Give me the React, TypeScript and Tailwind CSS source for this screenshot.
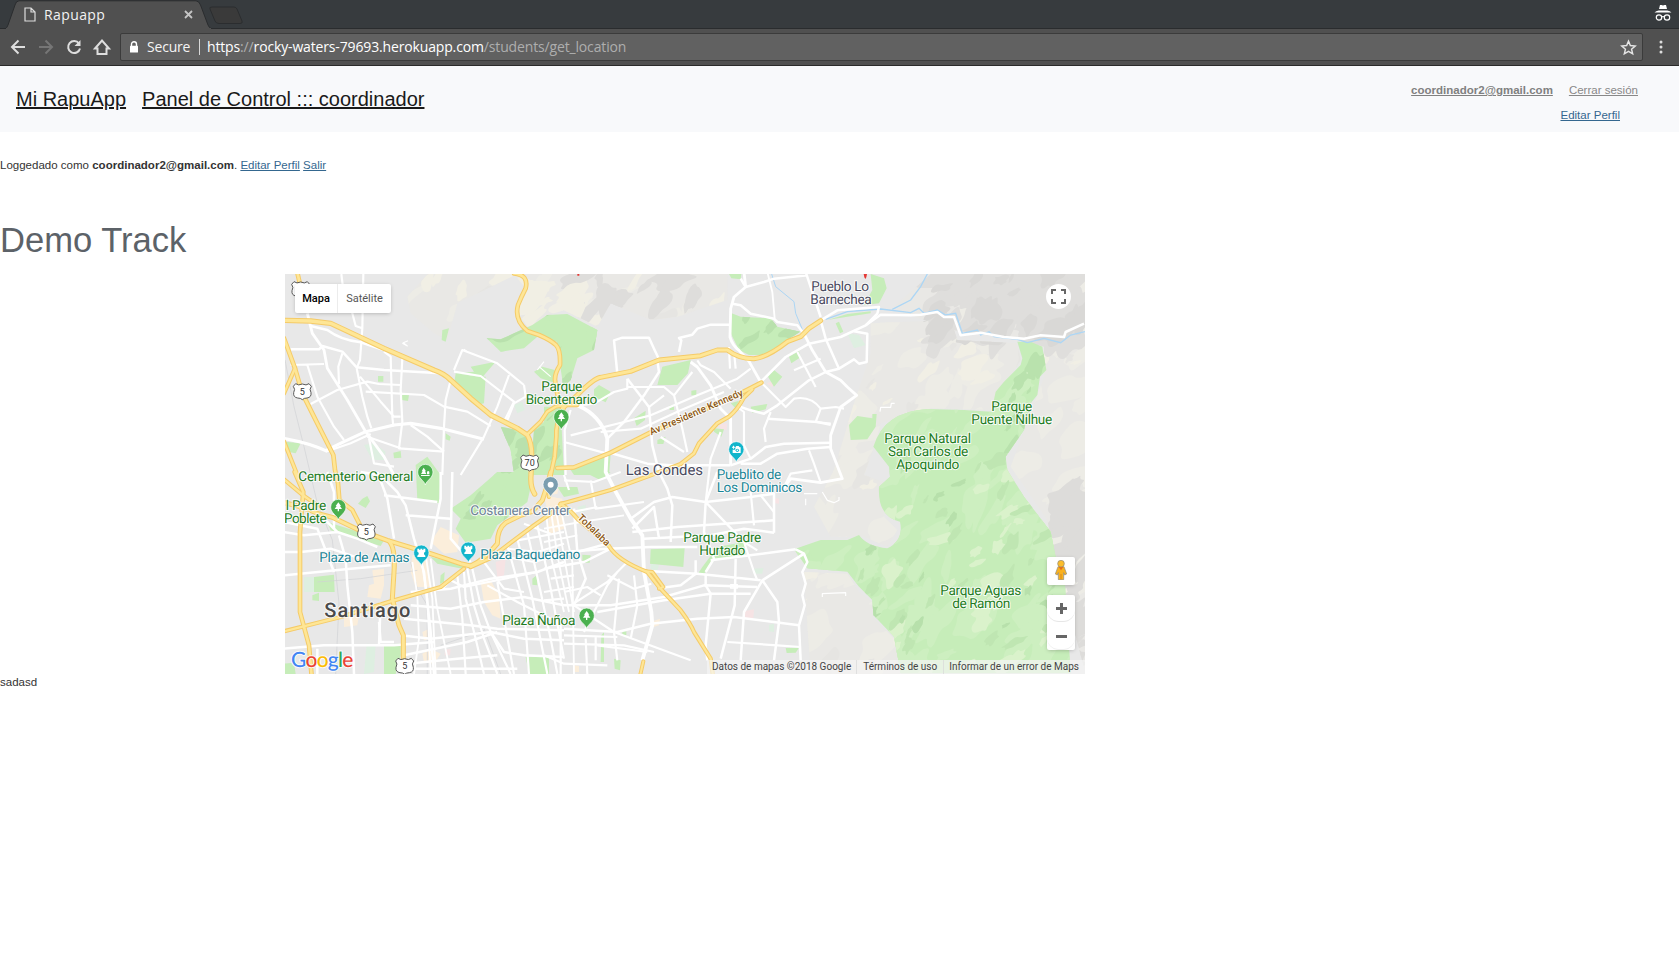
import React from "react";

type Pt = [number, number];

/* Map drawing is authored on a 2400x1200 canvas split in tiles. */
const TILES: Record<string, Pt> = {
  A: [-3, -12],
  B: [777, -12],
  C: [1557, -12],
  D: [-3, 594],
  E: [777, 594],
  F: [1557, 594],
  G: [837, -6],
};

type Piece = [string, string, number?];

const majorRoads: Piece[] = [
  ["A", "M0 151 L80 153 L140 160 L300 235 L450 300 Q480 310 500 330 L560 385 L620 435 L660 455 L700 475 L730 495 Q744 520 743 560 L741 615 Q738 650 752 672", 10],
  ["A", "M40 8 L52 60 M0 205 L33 295 L55 370 L100 460 L148 555 L153 600 L162 640 L166 690 L205 720 L228 765", 8],
  ["A", "M0 370 L33 295 M0 515 L40 615", 7],
  ["A", "M690 10 Q735 15 725 55 Q712 80 702 105 Q690 150 730 183 L765 195 Q800 210 816 225 Q830 240 828 285 Q812 310 813 330 L822 385 L840 412", 8],
  ["A", "M730 493 L770 455 L790 425 L815 410 L840 405 L880 405", 7],
  ["A", "M838 420 Q814 460 817 500 L812 560 L800 615 L795 680", 8],
  ["B", "M55 415 L100 375 Q150 325 170 322 L260 304 L345 270 L470 257 L520 240 L550 240 Q585 267 630 266 Q670 262 730 215 L770 200 L795 175 L830 152", 9],
  ["B", "M40 594 L90 592 L200 548 L320 487 L560 385 L652 338", 8],
  ["B", "M625 358 L600 382 Q580 420 555 440 L520 460 L465 520 L450 550 L410 582 L320 616 L200 660 L130 680 L50 702", 7],
  ["D", "M0 92 Q60 105 100 124 L145 136 L220 172 L310 205 L440 245 L530 275 L560 282 Q600 265 640 215 Q640 170 665 152 L710 130 L745 118 L775 85 L790 40 L800 0", 9],
  ["D", "M0 22 L60 72 L100 100", 7],
  ["D", "M560 285 L620 258 L680 212 L750 160 L800 125 L835 95", 7],
  ["D", "M0 478 L170 435 L320 388 L470 345 L540 290", 7],
  ["D", "M32 0 L58 60 L48 180 L48 420 L75 520 L83 612", 8],
  ["D", "M316 208 Q335 230 330 300 L325 380 L345 460 L358 490 L358 560", 9],
  ["E", "M50 95 Q80 115 100 140 L195 222 Q220 265 310 300 L345 345 L410 415 Q440 455 450 480 L500 560 L507 612", 7],
  ["E", "M305 298 L325 300 L358 345 L345 350 M298 568 L288 612", 6],
];

const whiteRoads: Piece[] = [
  ["A", "M70 130 L85 190 L120 240 L130 295 L190 390 L245 485 L300 560 L330 615", 7],
  ["A", "M0 505 Q80 520 125 542 L180 515 L245 485 L330 465 L380 460 L470 475 L600 508", 8],
  ["A", "M125 545 L200 520 L260 492", 5],
  ["A", "M172 12 L178 60 L205 130 L215 168 L235 175 L238 12 M235 175 L228 270 L218 295", 5],
  ["A", "M80 168 L130 180 Q170 210 230 217 L300 240 M20 238 L105 238 L115 228 L175 245 L218 292 L300 300 L470 310", 6],
  ["A", "M20 285 L120 282 M70 285 L100 380 L150 470 L180 510 M175 250 L163 290 L165 342 M80 402 L160 360 L250 335 L285 342 L350 345", 5],
  ["A", "M218 295 L235 380 L250 440 L262 475 M228 320 L290 395 L330 440 L350 440 M300 245 L320 260 L325 440 L328 470", 5],
  ["A", "M355 265 L350 360 L355 455 L345 535 L480 545 M245 365 L420 375 L480 410 L550 425 L620 468", 5],
  ["A", "M500 330 L485 390 L480 470 L475 615 M510 300 L535 240 L600 265 L640 280 L720 345 M510 305 L590 318 L690 395 L660 455 M675 315 L640 410 L600 500 L530 615", 5],
  ["A", "M720 345 L725 380 L690 400 L670 450 M380 465 L430 500 L480 545 M255 505 L270 580 L330 590 M250 500 L350 535", 5],
  ["A", "M540 238 L550 245 M355 220 L370 228 L358 218 L372 212 M765 290 L800 320 M780 275 L760 300", 2],
  ["B", "M65 615 L62 480 L80 420 M60 615 L75 660", 5],
  ["G", "M540 0 L545 45 L510 75 L500 110 L498 195 Q505 220 525 235 L555 268 L590 330", 7],
  ["G", "M545 45 L600 30 L630 20 L730 10 M725 0 L770 135 M530 20 L545 45", 6],
  ["G", "M505 95 L530 100 L560 125 L630 140 L640 150 L700 160 L720 185", 6],
  ["G", "M610 0 L625 60 L632 140", 4],
  ["G", "M345 240 L352 205 L345 198 L385 188 L400 170 L440 158 L498 158 M160 305 L150 205 L175 197 L255 197 L270 230 L285 262", 6],
  ["G", "M770 145 L820 115 L945 105 L940 125 L905 160 L830 195 L735 215 L665 255 L590 330", 6],
  ["G", "M905 160 L950 128 L1040 130 L1070 128 L1120 120 L1140 135 L1170 135 L1190 190 L1250 182 L1320 195 L1380 200 L1430 190 L1500 195 L1505 180 L1560 155", 6],
  ["G", "M870 178 L910 185 L908 270 L885 275 L870 262 L825 290 L785 300", 6],
  ["G", "M720 185 L745 235 L785 300 L830 325 L850 345 L878 370 L830 405 L800 490 L800 530 L835 620 L770 632 L680 620 L655 655", 7],
  ["G", "M770 145 L785 200 L825 290 M785 300 L735 325 L640 400 L600 425 L560 415 L530 405", 6],
  ["G", "M700 240 L755 345 M690 295 L770 260", 5],
  ["G", "M590 330 L665 405 L690 380 Q740 370 770 410 L815 405 L840 410 M770 410 L755 450 L800 455 M620 420 L600 470 L605 510", 5],
  ["G", "M610 440 L760 450 L800 458 M500 580 L560 560 L605 525 L660 515 L800 512 M530 575 L590 575 L640 545 L730 530 L800 525", 6],
  ["G", "M735 535 L750 575 L770 632 M655 655 L680 605 L745 595", 5],
  ["G", "M40 400 Q110 430 130 500 L125 600 L150 650 L200 740 L235 790 L240 900 L262 1020 L265 1060 L235 1165", 10],
  ["G", "M130 540 L250 575 L320 580 L500 580", 6],
  ["G", "M190 320 L255 405 L265 520 L285 600 L310 650 L325 700 L320 810", 6],
  ["G", "M280 265 L285 300 L240 370 L180 450 L130 500", 6],
  ["G", "M0 510 L130 545 M20 490 L180 450 L260 430 L400 370 L520 320 L560 290 M110 480 L230 470 L350 415 L480 360", 5],
  ["G", "M380 270 L400 285 L440 340 L470 410 L500 440 L500 580", 7],
  ["G", "M400 265 L410 280 L450 300 L500 350 M385 300 L330 370 L355 470 L370 540 M190 320 L190 350 L150 360 L90 395 L40 400 M255 405 L300 370 M330 370 L300 345 L190 345", 5],
  ["G", "M290 495 L360 540 M520 405 L540 420 L540 520 L560 560 M495 225 L498 290 M510 240 L515 290 M470 480 L440 560 L425 690", 5],
  ["G", "M425 690 L325 675 L270 690 L200 740 M425 690 L560 675 L630 665 L630 782 M425 690 L540 810 M425 690 L460 600 M425 690 L420 780 L450 860 L425 900", 6],
  ["G", "M205 770 L270 705 L285 800 M205 780 L340 765 L630 745 M240 800 L440 790 L540 770 L630 782 M0 840 L130 830 L260 825 L400 825", 6],
  ["G", "M80 625 L95 710 L240 690 M0 725 L100 705 M560 660 L570 760 M590 670 L630 720 M0 625 L90 630 L170 600", 5],
  ["G", "M695 832 L440 865 M695 832 L720 845 L730 870 L715 900 L725 935 L715 970 L722 1000 L705 1060 L710 1165", 6],
  ["G", "M720 845 L595 925 L540 1020 L530 1165 M595 925 L640 990 L645 1050 L630 1165", 6],
  ["G", "M250 897 L400 905 L590 925 M395 865 L395 905 L350 940 L290 948 M425 905 L425 940 L440 965 L425 1120 L430 1165 M515 860 L512 1000 L470 1160", 6],
  ["G", "M0 1000 L140 1000 L300 975 L420 940 L580 945 M100 1020 L300 985 L440 965 L560 965 M0 1070 L160 1080 L260 1055 L400 1040 L510 1035 L705 1060", 6],
  ["G", "M490 1110 L640 1120 L710 1125 M30 1000 L150 1080 L380 1165 M100 1120 L250 1140 M540 810 L570 900 L580 925 M540 810 L580 835", 5],
  ["G", "M160 900 L130 940 L60 1080 M165 920 L150 1080 L160 1165 M210 910 L220 1000 L200 1100 M190 870 L130 930 L20 1000 M130 910 L210 950 L262 935", 5],
  ["G", "M0 1090 L160 1095 M0 1115 L180 1120 L270 1140 M95 1095 L95 1165 M0 960 L70 945 L110 970", 5],
  ["G", "M500 938 L520 938 L520 948 L500 948 Z", 3],
  ["C", "M228 425 L230 412 L260 412 L262 400 L272 400", 2],
  ["D", "M0 180 L60 190 L160 180 L220 200 L280 225 M165 190 L185 260 L190 340 L205 480 L210 606 M110 130 L160 180 M0 150 L100 170 L150 300", 6],
  ["D", "M230 0 L290 10 L340 60 L365 100 L390 200 L420 300 L440 480 L450 606 M280 0 L310 80 L330 200 M300 70 L460 90 M365 130 L500 140", 6],
  ["D", "M470 0 L470 80 L440 230 M505 0 L500 200 L560 270 M130 0 L150 60 L150 170 M0 240 L50 240 L140 230 L230 260", 6],
  ["D", "M410 250 L430 380 L440 606 M425 250 L445 380 L455 606 M440 260 L458 400 L500 606 M385 270 L400 370 L405 500 L390 606", 4],
  ["D", "M550 290 L570 400 L600 500 L640 606 M565 290 L590 400 L620 480 L680 606 M540 300 L545 380 L575 500 L600 606 M520 310 L535 440 L545 606", 5],
  ["D", "M380 360 L500 350 L620 320 L760 300 L840 270 M380 400 L500 410 L600 390 L720 375 L840 400 M360 440 L560 460 L640 470 L840 475", 6],
  ["D", "M350 490 L440 500 L620 480 L720 500 L840 505 M0 530 L120 520 L330 520 L450 510 M360 550 L550 510 L640 480 M285 450 L290 510 L330 510", 6],
  ["D", "M620 480 L660 540 L720 550 L840 555 M370 575 L520 560 L640 550 M370 590 L700 590 M100 530 L100 606 M290 390 L285 520 M0 310 L200 290 L320 280", 6],
  ["D", "M640 330 L690 606 M670 220 L720 400 L735 606 M700 200 L745 380 L790 606 M730 180 L770 360 L800 500 L820 606 M760 160 L800 350 L840 560 M600 270 L660 350 L720 360", 5],
  ["D", "M640 250 L750 270 L840 245 M670 230 L760 240 L840 215 M700 205 L840 180 M610 340 L700 390 L800 440 M720 155 L800 185 M475 350 L500 325 L540 345 L760 300", 5],
  ["E", "M5 110 L20 250 L60 420 M20 110 L40 250 L75 420 M35 110 L65 280 L90 420 M50 110 L85 270 L90 606 M0 170 L110 150 L240 130 M0 210 L100 190", 4],
  ["E", "M0 260 L100 240 L190 215 M0 290 L120 270 L200 230 M90 110 L100 240 L125 320 L90 400", 6],
  ["E", "M0 550 L60 575 L190 580 M50 440 L50 606 M125 500 L130 606 M20 320 L90 310 M0 385 L60 380 M0 360 L90 345", 5],
  ["F", "M0 65 L40 65 M5 100 L5 80 M55 60 L70 85 L90 92 L105 85 L105 75", 2],
  ["F", "M55 375 L55 365 L125 362 L125 372", 2],
];

const greens: Piece[] = [
  ["A", "M608 205 L650 208 L690 190 L745 165 L790 135 L850 132 L940 180 L930 240 L880 265 L860 330 L838 350 L818 215 L760 200 L720 235 L650 245 Z"],
  ["A", "M750 305 L775 290 L812 300 L815 340 L770 325 Z"],
  ["A", "M515 310 L595 322 L635 275 L560 290 L570 305 M515 310 L605 320 L600 400 L580 405 L510 345 Z"],
  ["A", "M650 470 L700 480 L728 500 L750 600 L690 615 L680 540 Z M750 480 L830 415 L840 615 L740 615 Z"],
  ["A", "M475 180 L495 175 L485 215 L473 210 Z M355 373 L375 375 L372 393 L353 390 Z M282 318 L298 318 L298 335 L282 335 Z M328 548 L350 543 L352 563 L330 565 Z M3 515 L50 520 L35 550 L10 545 Z M485 490 L500 500 L497 512 L485 508 Z"],
  ["A", "M395 585 L430 560 L470 615 L465 700 L400 690 Z"],
  ["B", "M563 130 L590 140 L680 145 L700 170 L768 185 L730 210 L660 255 L615 255 L585 240 L560 190 Z"],
  ["B", "M355 290 L440 270 L432 310 L400 345 L340 345 Z M150 358 L165 345 L200 365 L185 397 L150 380 Z M270 445 L305 422 L303 450 L278 468 Z M340 510 L365 500 L358 522 L340 522 Z M442 362 L457 360 L457 376 L442 376 Z M375 408 L390 404 L390 420 L377 420 Z"],
  ["B", "M0 410 L50 410 L40 520 L15 560 L0 615 Z M80 600 L150 560 L200 553 L195 615 L90 615 Z"],
  ["B", "M690 300 L715 320 L690 350 L672 320 Z M735 260 L765 243 L770 262 L742 280 Z M620 410 L670 402 L665 418 L625 428 Z M510 475 L540 478 L532 500 L510 485 Z M555 12 L592 12 L590 28 L562 25 Z M560 400 L585 392 L575 415 Z"],
  ["C", "M200 12 L240 25 L248 55 L225 100 L180 106 L205 60 Z M95 160 L105 155 L118 185 L108 190 Z M70 150 L130 132 L200 124 L200 130 L130 140 Z"],
  ["C", "M135 465 L160 438 L205 445 L205 432 L218 432 L215 470 L190 508 L140 510 Z"],
  ["C", "M208 530 Q240 425 370 417 L480 420 L562 425 L575 365 L600 335 L650 285 L655 265 L640 215 L680 215 L715 230 L727 300 L708 320 L700 375 L680 400 L660 480 L605 560 L610 600 L660 680 L740 785 L755 860 L780 900 L800 1210 L290 1210 L270 1100 L208 1035 L205 990 L165 950 L130 905 L10 895 L-30 838 L50 810 L130 810 L165 795 Q190 830 250 835 Q300 810 288 755 Q220 740 225 650 L258 620 L255 590 Z"],
  ["D", "M500 110 L560 70 L640 0 L750 0 L730 90 L680 130 L640 160 L620 200 L545 212 L515 170 L530 140 Z"],
  ["D", "M130 150 L225 180 L300 205 L290 222 L140 175 Z M90 315 L150 308 L152 360 L90 360 Z M85 370 L105 362 L105 387 L85 385 Z M300 517 L350 515 L350 550 L335 606 L300 606 Z M725 555 L795 553 L795 606 L735 606 Z"],
  ["D", "M235 80 L250 72 L258 88 L245 108 L222 95 Z M440 255 L540 278 L535 290 L460 275 Z M470 310 L482 300 L480 330 L468 335 Z M745 320 L758 310 L760 340 L745 338 Z M0 575 L30 572 L35 606 L0 606 Z"],
  ["E", "M320 232 L422 228 L418 285 L318 275 Z M115 248 L140 250 L137 272 L115 272 Z M475 285 L520 225 L600 210 L605 250 L510 265 L480 305 L460 308 Z M750 235 L790 220 L820 290 L790 288 L785 250 Z"],
  ["E", "M235 478 L247 478 L247 490 L235 490 Z M725 528 L765 527 L755 542 L728 543 Z M0 558 L15 562 L15 606 L0 606 Z M172 490 L180 480 L180 570 L170 570 Z M210 560 L230 565 L228 595 L212 590 Z M120 0 L200 0 L170 25 Z M40 45 L100 45 L105 65 L60 75 Z"],
];

const paleGreens: Piece[] = [
  ["A", "M690 405 L715 395 L722 420 L700 430 Z M240 525 L270 520 L305 545 L300 570 L265 570 Z"],
  ["C", "M130 190 L165 195 L185 225 L150 235 Z"],
  ["D", "M248 515 L275 518 L270 600 L240 606 Z M60 315 L90 315 L90 360 L60 360 Z"],
  ["E", "M630 290 L658 288 L655 305 L635 305 Z M675 458 L690 455 L690 480 L675 478 Z M100 105 L125 98 L125 118 L105 120 Z M320 275 L345 280 L340 295 L320 292 Z"],
];

const creams: Piece[] = [
  ["D", "M440 210 L470 165 L525 190 L520 240 L480 245 Z M385 250 L430 250 L440 345 L395 345 L380 300 Z M265 295 L300 290 L300 340 L290 380 L250 375 L255 340 L270 335 Z M180 435 L225 430 L220 460 L180 465 Z"],
  ["D", "M590 330 L620 325 L645 370 L650 440 L625 430 L600 390 Z M415 480 L435 470 L445 500 L420 505 Z M415 545 L440 530 L470 545 L450 575 L420 570 Z M800 75 L835 80 L840 170 L790 190 Z"],
  ["E", "M0 70 L50 80 L60 110 L10 120 Z M320 450 L348 440 L345 460 L320 468 Z M90 580 L105 582 L105 600 L90 600 Z M10 50 L45 45 L40 65 L15 70 Z"],
];

const terrain: Piece[] = [
  ["A", "M370 80 L430 12 L690 12 L725 55 L700 130 L740 180 L780 140 L840 120 L940 170 L980 100 L1100 150 L1180 140 L1330 90 L1330 12 L700 12 L520 100 L490 210 L450 190 L380 130 Z"],
  ["C", "M380 12 L843 12 L843 1206 L750 850 L730 750 L620 590 L720 320 L720 230 L640 210 L450 180 L300 130 L270 110 Z"],
  ["C", "M200 160 L440 150 L460 210 L640 220 L650 270 L560 420 L380 415 L230 460 L215 520 L180 615 L250 640 L240 740 L280 780 L250 830 L180 800 L80 800 L30 710 L90 600 L150 400 L200 250 Z"],
  ["F", "M0 300 L130 305 L165 360 L205 390 L210 440 L270 500 L290 606 L20 606 Z"],
];

const pinkish: Piece[] = [
  ["E", "M600 418 L630 412 L628 438 L602 440 Z M692 78 L705 80 L705 95 L692 94 Z"],
  ["D", "M635 270 L665 260 L660 310 L640 318 Z M483 533 L500 530 L498 550 L482 550 Z"],
  ["B", "M668 340 L690 332 L685 352 Z M525 462 L550 460 L548 480 L528 478 Z"],
];

const rivers: Piece[] = [
  ["B", "M683 12 L695 50 L750 95 L755 130 L775 178", 3],
  ["C", "M370 12 L350 50 L320 90 L265 118 M65 148 L130 125 L230 117 L320 128 L345 115 L360 130 L400 120 L425 135 L455 130 L475 190 L520 180 L530 195 L555 185 L570 200 L640 208 L670 218 L720 205 L770 218 L800 195 L843 185", 4],
];

const rails: Piece[] = [
  ["A", "M3 270 L30 410 L60 530 L80 615 L100 700 L145 810 L165 1000 L155 1212", 2],
  ["D", "M100 330 L230 320 L400 295 M380 270 L400 350 L430 400 L430 606 M600 470 L650 606 M470 520 L600 475", 2],
];

/* Outline of the large eastern park, reused to clip its relief. */
const EAST_PARK = greens[12][1];

function Layer({ data, widen = 0, ...rest }: { data: Piece[]; widen?: number } & React.SVGProps<SVGGElement>) {
  return (
    <g {...rest}>
      {data.map(([t, d, w], i) => (
        <path key={i} d={d} strokeWidth={w === undefined ? undefined : w + widen} transform={`translate(${TILES[t][0]} ${TILES[t][1]})`} />
      ))}
    </g>
  );
}

/* Slanted relief patches with rounded outlines, repeatable from a seed. */
function relief(seed: number, count: number, box: [number, number, number, number], size: number) {
  let s = seed;
  const rnd = () => {
    s = (s * 1664525 + 1013904223) % 4294967296;
    return s / 4294967296;
  };
  const out: string[] = [];
  for (let i = 0; i < count; i++) {
    const cx = box[0] + rnd() * box[2];
    const cy = box[1] + rnd() * box[3];
    const len = size * (0.4 + rnd() * 1.1);
    const wid = len * (0.25 + rnd() * 0.4);
    const rot = -0.8 + (rnd() - 0.5) * 1.1;
    const pts: Pt[] = [];
    const n = 14;
    for (let k = 0; k < n; k++) {
      const a = (k / n) * Math.PI * 2;
      const r = 0.5 + rnd() * 0.8;
      const x = Math.cos(a) * len * r;
      const y = Math.sin(a) * wid * r;
      pts.push([cx + x * Math.cos(rot) - y * Math.sin(rot), cy + x * Math.sin(rot) + y * Math.cos(rot)]);
    }
    const mid = (p: Pt, q: Pt) => `${((p[0] + q[0]) / 2).toFixed(0)} ${((p[1] + q[1]) / 2).toFixed(0)}`;
    let d = `M${mid(pts[n - 1], pts[0])}`;
    for (let k = 0; k < n; k++) {
      d += `Q${pts[k][0].toFixed(0)} ${pts[k][1].toFixed(0)} ${mid(pts[k], pts[(k + 1) % n])}`;
    }
    out.push(d + "Z");
  }
  return out;
}

function Relief({ shapes, fill }: { shapes: string[]; fill: string }) {
  return (
    <g fill={fill}>
      {shapes.map((d, i) => (
        <path key={i} d={d} />
      ))}
    </g>
  );
}

function Pin({ x, y, color, kind }: { x: number; y: number; color: string; kind: "tree" | "rook" | "camera" | "dot" | "grave" }) {
  return (
    <g transform={`translate(${x} ${y})`}>
      <path d="M0 38 C-3 24 -23 18 -23 -1 A23 23 0 1 1 23 -1 C23 18 3 24 0 38Z" fill={color} stroke="#fff" strokeWidth="2" />
      {kind === "tree" && <path d="M0 -15 L8 -4 H5 L11 5 H2 V12 H-2 V5 H-11 L-5 -4 H-8Z" fill="#fff" />}
      {kind === "grave" && <path d="M-5 -14 L2 -3 H-1 L3 5 H-13 L-8 -3 H-11Z M5 -2 Q9 -6 12 -2 V6 H5Z M-13 8 H13 V11 H-13Z" fill="#fff" />}
      {kind === "rook" && <path d="M-12 -13 H-6 V-9 H-3 V-13 H3 V-9 H6 V-13 H12 V-4 L8 -1 V4 L12 8 V12 H-12 V8 L-8 4 V-1 L-12 -4Z" fill="#fff" />}
      {kind === "camera" && (
        <>
          <path d="M-3 -7 L0 -11 H7 L10 -7 H13 V10 H-11 V0 H-3Z M-13 -9 H-10 V-12 H-7 V-9 H-4 V-6 H-7 V-3 H-10 V-6 H-13Z" fill="#fff" />
          <circle cx="3" cy="2" r="5" fill={color} />
          <circle cx="3" cy="2" r="2.5" fill="#fff" />
        </>
      )}
      {kind === "dot" && <circle r="9" fill="#fff" />}
    </g>
  );
}

function Shield({ x, y, n }: { x: number; y: number; n: string }) {
  return (
    <g transform={`translate(${x} ${y})`}>
      <path
        d="M-20 -23 Q-12 -16 0 -22 Q12 -16 20 -23 L27 -15 Q20 -6 26 4 Q28 18 14 20 Q5 20 0 25 Q-5 20 -14 20 Q-28 18 -26 4 Q-20 -6 -27 -15Z"
        fill="#fff"
        stroke="#5b5b5b"
        strokeWidth="3"
      />
      <text textAnchor="middle" y="10" fontSize="27" fill="#333">
        {n}
      </text>
    </g>
  );
}

type LabelData = [string, number, number, number, string, number?];
const GREEN = "#1f7d24";
const TEAL = "#1b8596";
const INK = "#4a4a60";
const labels: LabelData[] = [
  ["Pueblo Lo", 1579, 50, 173, INK],
  ["Barnechea", 1576, 89, 184, INK],
  ["Parque", 2119, 410, 123, GREEN],
  ["Puente Ñilhue", 2059, 449, 243, GREEN],
  ["Parque Natural", 1798, 506, 260, GREEN],
  ["San Carlos de", 1809, 545, 241, GREEN],
  ["Apoquindo", 1834, 584, 189, GREEN],
  ["Parque Aguas", 1966, 963, 243, GREEN],
  ["de Ramón", 2002, 1002, 174, GREEN],
  ["Las Condes", 1022, 603, 232, INK, 45],
  ["Pueblito de", 1295, 614, 194, TEAL],
  ["Los Dominicos", 1295, 653, 257, TEAL],
  ["Parque Padre", 1195, 803, 234, GREEN],
  ["Hurtado", 1243, 842, 138, GREEN],
  ["Parque", 769, 350, 123, GREEN],
  ["Bicentenario", 722, 389, 215, GREEN],
  ["Cementerio General", 40, 620, 345, GREEN],
  ["l Padre", 2, 708, 122, GREEN],
  ["Poblete", -3, 746, 128, GREEN],
  ["Plaza de Armas", 103, 863, 271, TEAL],
  ["Plaza Baquedano", 586, 854, 300, TEAL],
  ["Costanera Center", 556, 722, 301, "#6c8297"],
  ["Plaza Ñuñoa", 652, 1052, 219, GREEN],
];

function MapCanvas() {
  return (
    <svg viewBox="0 0 2400 1200" className="block h-[400px] w-[800px]" fontFamily="Roboto, sans-serif">
      <defs>
        <clipPath id="parkClip">
          <path d={EAST_PARK} transform="translate(1557 -12)" />
        </clipPath>
        <clipPath id="hillClip">
          {terrain.map(([t, d], i) => (
            <path key={i} d={d} transform={`translate(${TILES[t][0]} ${TILES[t][1]})`} />
          ))}
        </clipPath>
        <clipPath id="westClip">
          <path d={greens[0][1]} transform="translate(-3 -12)" />
          <path d={greens[3][1]} transform="translate(-3 -12)" />
          <path d={greens[6][1]} transform="translate(777 -12)" />
          <path d={greens[13][1]} transform="translate(-3 594)" />
        </clipPath>
      </defs>
      <rect width="2400" height="1200" fill="#e8e8e8" />
      <Layer data={terrain} fill="#e9e8e5" />
      <g clipPath="url(#hillClip)">
        <Relief shapes={relief(11, 190, [350, 0, 2050, 1200], 62)} fill="#edece6" />
        <Relief shapes={relief(67, 110, [350, 0, 2050, 1200], 42)} fill="#f1efe5" />
        <Relief shapes={relief(5, 80, [350, 0, 2050, 1200], 34)} fill="#e6e5e2" />
        <Relief shapes={relief(23, 50, [1950, 0, 450, 190], 66)} fill="#dfdedc" />
        <Relief shapes={relief(29, 22, [1950, 0, 450, 190], 44)} fill="#d9d8d6" />
        <Relief shapes={relief(9, 34, [2330, 600, 70, 600], 60)} fill="#dddcda" />
        <Relief shapes={relief(31, 14, [850, 0, 380, 130], 54)} fill="#dedddb" />
        <Relief shapes={relief(37, 12, [700, 30, 160, 110], 60)} fill="#f1efe4" />
      </g>
      <Layer data={creams} fill="#fbeedb" />
      <Layer data={pinkish} fill="#f6e3e4" />
      <Layer data={paleGreens} fill="#deefe1" />
      <Layer data={greens} fill="#c6edb9" />
      <g clipPath="url(#parkClip)">
        <Relief shapes={relief(77, 110, [1540, 200, 860, 1000], 60)} fill="#cdefc0" />
        <Relief shapes={relief(41, 36, [1780, 560, 560, 640], 36)} fill="#daf2cb" />
        <Relief shapes={relief(19, 40, [1700, 560, 680, 560], 32)} fill="#bfe6b2" />
        <Relief shapes={relief(51, 16, [1740, 600, 620, 500], 24)} fill="#b7e0ab" />
        <Relief shapes={relief(53, 14, [2150, 250, 140, 300], 34)} fill="#b9e2ad" />
      </g>
      <g clipPath="url(#westClip)">
        <Relief shapes={relief(3, 70, [480, 100, 1080, 740], 44)} fill="#b9e1ad" />
        <Relief shapes={relief(8, 60, [480, 100, 1080, 740], 34)} fill="#c6edb9" />
      </g>
      <Layer data={rivers} fill="none" stroke="#acd6f5" />
      <Layer data={rails} fill="none" stroke="#d0d2d4" />
      <Layer data={whiteRoads} widen={1.5} fill="none" stroke="#ffffff" strokeLinejoin="round" />
      <Layer data={majorRoads} widen={6} fill="none" stroke="#f5cb68" strokeLinejoin="round" strokeLinecap="round" />
      <Layer data={majorRoads} fill="none" stroke="#fee696" strokeLinejoin="round" strokeLinecap="round" />
      <path d="M877 0 h6 v5 h-6z M1736 0 h10 l-2 10 l-3 5 l-3 -5z" fill="#e53935" />

      <Shield x={47} y={46} n="" />
      <Shield x={52} y={352} n="5" />
      <Shield x={734} y={566} n="70" />
      <Shield x={244} y={773} n="5" />
      <Shield x={359} y={1176} n="5" />

      <Pin x={829} y={430} color="#4bb04f" kind="tree" />
      <Pin x={421} y={595} color="#4bb04f" kind="grave" />
      <Pin x={160} y={700} color="#4bb04f" kind="tree" />
      <Pin x={905} y={1026} color="#4bb04f" kind="tree" />
      <Pin x={1354} y={527} color="#12b5cb" kind="camera" />
      <Pin x={409} y={837} color="#12b5cb" kind="rook" />
      <Pin x={550} y={828} color="#12b5cb" kind="rook" />
      <Pin x={797} y={632} color="#7b9eb0" kind="dot" />

      <g
        stroke="#fff"
        strokeOpacity="0.85"
        strokeLinejoin="round"
        paintOrder="stroke"
        strokeWidth="6"
        textRendering="geometricPrecision"
      >
        {labels.map(([t, x, y, w, c, size]) => (
          <text key={t + x} x={x} y={y} textLength={w} fontSize={size ?? 41} fill={c}>
            {t}
          </text>
        ))}
        <text x="118" y="1030" textLength="258" fontSize="60" fontWeight="500" fill="#4a4a4a">
          Santiago
        </text>
        <g fill="#8a5716" fontWeight="500" fontSize="30">
          <text textLength="302" transform="translate(1099 484) rotate(-23.5)">
            Av Presidente Kennedy
          </text>
          <text textLength="122" transform="translate(876 733) rotate(44)">
            Tobalaba
          </text>
        </g>
        <text x="18" y="1180" textLength="187" fontFamily="Lato, sans-serif" fontSize="63" fontWeight="500">
          <tspan fill="#4285f4">G</tspan>
          <tspan fill="#ea4335">o</tspan>
          <tspan fill="#fbbc05">o</tspan>
          <tspan fill="#4285f4">g</tspan>
          <tspan fill="#34a853">l</tspan>
          <tspan fill="#ea4335">e</tspan>
        </text>
      </g>
    </svg>
  );
}

function MapWidget() {
  return (
    <div className="relative h-[400px] w-[800px] overflow-hidden bg-[#e8e8e8] font-[Roboto,sans-serif]">
      <MapCanvas />
      <div className="absolute top-[10px] left-[10px] flex h-[29px] rounded-[2px] bg-white text-[11px] leading-[29px] shadow-[0_1px_4px_-1px_rgba(0,0,0,0.3)]">
        <div className="w-[43px] border-r border-[#ececec] text-center font-medium text-black">Mapa</div>
        <div className="w-[53px] text-center text-[#565656]">Satélite</div>
      </div>
      <div className="absolute top-[10px] left-[761px] flex size-[25px] items-center justify-center rounded-full bg-white">
        <svg viewBox="0 0 15 15" className="size-[15px]" fill="none" stroke="#666" strokeWidth="2">
          <path d="M1 5V1H5 M10 1H14V5 M14 10V14H10 M5 14H1V10" />
        </svg>
      </div>
      <div className="absolute top-[283px] left-[762px] flex h-[28px] w-[28px] items-center justify-center rounded-[2px] bg-white pb-[2px] shadow-[0_1px_4px_-1px_rgba(0,0,0,0.3)]">
        <svg viewBox="0 0 36 60" className="h-[20px] w-[12px]">
          <path d="M9 20 H27 L35 42 L29 45 L26 38 V59 H10 V38 L7 45 L1 42Z" fill="#f9b11f" stroke="#8d8a80" strokeWidth="2" />
          <circle cx="18" cy="11" r="10" fill="#fbbd2b" stroke="#8d8a80" strokeWidth="2" />
          <path d="M11 21 H25 L18 31Z" fill="#e3701b" />
          <path d="M18 42 V58" stroke="#d98a17" strokeWidth="3" />
        </svg>
      </div>
      <div className="absolute top-[321px] left-[762px] flex h-[55px] w-[28px] flex-col items-center rounded-[2px] bg-white shadow-[0_1px_4px_-1px_rgba(0,0,0,0.3)]">
        <div className="flex h-[27px] w-[28px] items-center justify-center rounded-b-[12px] border-b border-[#e6e6e6]">
          <svg viewBox="0 0 11 11" className="size-[11px]" stroke="#666" strokeWidth="3">
            <path d="M0 5.5H11M5.5 0V11" />
          </svg>
        </div>
        <div className="flex h-[28px] w-[28px] items-center justify-center rounded-[12px] border-b border-[#eee] pt-[2px]">
          <svg viewBox="0 0 11 11" className="size-[11px]" stroke="#666" strokeWidth="3">
            <path d="M0 5.5H11" />
          </svg>
        </div>
      </div>
      <div className="absolute right-0 bottom-0 flex h-[14px] bg-[#f5f5f5]/70 text-[10px] leading-[14px] whitespace-nowrap text-[#444]">
        <span className="pr-[5px] pl-[5px]">Datos de mapas ©2018 Google</span>
        <span className="border-l border-[#d8d8d8]/70 px-[6px]">Términos de uso</span>
        <span className="border-l border-[#d8d8d8]/70 pr-[6px] pl-[5px]">Informar de un error de Maps</span>
      </div>
    </div>
  );
}

function BrowserChrome() {
  return (
    <div className="h-[66px] font-['Open_Sans','Noto_Sans',sans-serif]">
      <div className="relative flex h-[29px] items-start justify-between bg-[#373b3e]">
        <svg viewBox="0 0 1679 29" className="absolute top-0 left-0 h-[29px] w-[1679px]">
          <path d="M0 28.5H1679" stroke="#2a2c2e" />
          <path d="M5 29 Q7 28 8 25 L15 5 Q16 1 19 .8 H196 Q199 1 200.5 5 L208 25 Q209 28 212 29Z" fill="#505050" stroke="#2a2c2e" />
          <path d="M6 29H211" stroke="#505050" strokeWidth="2" />
          <path d="M210 9 Q209 7 212 7 H234 Q236 7 237 9 L242 21 Q243 23.500 240 23.500 H219 Q216 23.500 215 21Z" fill="#3a3a3a" stroke="#2b2d2f" />
        </svg>
        <div className="relative flex h-[29px] items-center pl-[24px]">
          <svg viewBox="0 0 12 15" className="h-[15px] w-[12px]" fill="none" stroke="#dcdcdc" strokeWidth="1.2">
            <path d="M1 1H7L11 5V14H1Z M7 1V5H11" />
          </svg>
          <span className="ml-[8px] w-[140px] pt-px text-[14px] leading-[28px] tracking-[0.4px] text-[#f2f2f2]">Rapuapp</span>
          <svg viewBox="0 0 9 9" className="h-[9px] w-[9px]" stroke="#c4c4c4" strokeWidth="1.8">
            <path d="M1 1L8 8M8 1L1 8" />
          </svg>
        </div>
        <svg viewBox="0 0 18 18" className="relative mt-[4px] mr-[7px] size-[18px]" fill="#fff">
          <path d="M5 5 L6 1 L7.500 1 L9 1.600 L10.500 1 H12 L13 5Z M0.500 8.500 Q2 6.800 4.500 6.500 H13.500 Q16 6.800 17.500 8.500Z" />
          <g fill="none" stroke="#fff" strokeWidth="1.2">
            <circle cx="5" cy="13.500" r="2.700" />
            <circle cx="13" cy="13.500" r="2.700" />
            <path d="M7.500 13 Q9 12 10.500 13" />
          </g>
        </svg>
      </div>
      <div className="flex h-[37px] items-center border-b border-[#2a2a2a] bg-[#505050]">
        <svg viewBox="0 0 112 36" className="h-[36px] w-[112px]" fill="none" stroke="#dedede" strokeWidth="2">
          <path d="M25 18H12 M18.500 11.500L12 18L18.500 24.500" />
          <path d="M39 18H52 M45.500 11.500L52 18L45.500 24.500" stroke="#767676" />
          <path d="M79 14.500 A6 6 0 1 0 80 19.500" />
          <path d="M80.500 11 V17 H74.500Z" fill="#dedede" stroke="none" />
          <path d="M95 19.500 L102 11.500 L109 19.500 H106.500 V25 H97.500 V19.500Z" />
        </svg>
        <div className="ml-[8px] flex h-[28px] w-[1523px] items-center rounded-[2px] border border-[#3b3b3b] bg-[#616161] text-[14px] leading-[26px]">
          <svg viewBox="0 0 10 12" className="ml-[8px] h-[12px] w-[10px]">
            <path d="M2.500 5V3.200a2.500 2.500 0 0 1 5 0V5" fill="none" stroke="#fff" strokeWidth="1.4" />
            <rect x="1" y="4.800" width="8" height="6.700" rx=".6" fill="#fff" />
          </svg>
          <span className="ml-[8px] w-[52px] tracking-[-0.2px] text-[#f4f4f4]">Secure</span>
          <span className="h-[16px] w-px bg-[#d8d8d8]" />
          <span className="ml-[7px] grow tracking-[-0.15px] whitespace-nowrap text-[#aeaeae]">
            <span className="text-white">https</span>://<span className="text-white">rocky-waters-79693.herokuapp.com</span>/students/get_location
          </span>
          <svg viewBox="0 0 24 24" className="mr-[5px] size-[17px]" fill="none" stroke="#e6e6e6" strokeWidth="2">
            <path d="M12 3 L14.600 9.200 L21.500 9.800 L16.300 14.300 L17.900 21 L12 17.400 L6.100 21 L7.700 14.300 L2.500 9.800 L9.400 9.200Z" />
          </svg>
        </div>
        <svg viewBox="0 0 4 14" className="ml-[16px] h-[14px] w-[4px]" fill="#dedede">
          <circle cx="2" cy="2" r="1.500" />
          <circle cx="2" cy="7" r="1.500" />
          <circle cx="2" cy="12" r="1.500" />
        </svg>
      </div>
    </div>
  );
}

export default function App() {
  return (
    <div className="h-[957px] w-[1679px] overflow-hidden bg-white font-['Liberation_Sans',Arial,sans-serif] text-[11.52px] text-[#333]">
      <BrowserChrome />
      <header className="flex h-[66px] justify-between bg-[#f8f9fb]">
        <nav className="flex gap-[16px] pt-[18px] pl-[16px] text-[20px] leading-[30px] text-[#1a1a1a]">
          <a className="underline">Mi RapuApp</a>
          <a className="underline">Panel de Control ::: coordinador</a>
        </nav>
        <div className="flex flex-col items-end pt-[12px] pr-[41px] leading-[25px]">
          <div className="flex gap-[16px] text-[#888]">
            <a className="font-bold text-[#808080] underline">coordinador2@gmail.com</a>
            <a className="underline">Cerrar sesión</a>
          </div>
          <a className="mr-[18px] text-[#34678f] underline">Editar Perfil</a>
        </div>
      </header>
      <p className="mt-[25px] h-[16px] leading-[16px]">
        Loggedado como <strong>coordinador2@gmail.com</strong>. <a className="text-[#34678f] underline">Editar Perfil</a>{" "}
        <a className="text-[#34678f] underline">Salir</a>
      </p>
      <h1 className="mt-[47px] h-[40px] text-[34.6px] leading-[40px] text-[#5c6268]">Demo Track</h1>
      <div className="mt-[14px] ml-[285px]">
        <MapWidget />
      </div>
      <p className="leading-[16px]">sadasd</p>
    </div>
  );
}
